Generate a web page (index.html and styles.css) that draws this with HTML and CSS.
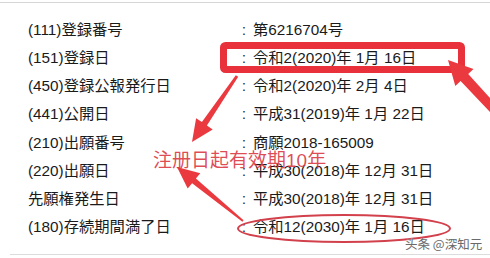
FILE: index.html
```html
<!DOCTYPE html>
<html lang="ja">
<head>
<meta charset="utf-8">
<link rel="stylesheet" href="styles.css">
</head>
<body>
<div class="page">
  <div class="sheet">
    <div class="row"><span class="label">(111)登録番号</span><span class="colon">:</span><span class="value">第6216704号</span></div>
    <div class="row"><span class="label">(151)登録日</span><span class="colon">:</span><span class="value">令和2(2020)年 1月 16日</span></div>
    <div class="row"><span class="label">(450)登録公報発行日</span><span class="colon">:</span><span class="value">令和2(2020)年 2月 4日</span></div>
    <div class="row"><span class="label">(441)公開日</span><span class="colon">:</span><span class="value">平成31(2019)年 1月 22日</span></div>
    <div class="row"><span class="label">(210)出願番号</span><span class="colon">:</span><span class="value">商願2018-165009</span></div>
    <div class="row"><span class="label">(220)出願日</span><span class="colon">:</span><span class="value">平成30(2018)年 12月 31日</span></div>
    <div class="row"><span class="label">先願権発生日</span><span class="colon">:</span><span class="value">平成30(2018)年 12月 31日</span></div>
    <div class="row"><span class="label">(180)存続期間満了日</span><span class="colon">:</span><span class="value">令和12(2030)年 1月 16日</span></div>
  </div>
  <div class="rule"></div>
  <svg class="marks" width="490" height="258" viewBox="0 0 490 258">
    <rect x="223.5" y="45.5" width="238" height="24" rx="2" fill="none" stroke="#e8313a" stroke-width="7"/>
    <ellipse cx="344" cy="228.5" rx="106" ry="13.5" fill="none" stroke="#d2404c" stroke-width="2"/>
    <polygon fill="#ea3a40" points="448,60 473.5,68.9 468.2,73.9 503.3,112.9 496.7,119.1 460.6,81.1 455.3,86.1"/>
    <polygon fill="#ea3a40" points="192,142 196.1,118.2 201.9,122.1 235.8,75.2 238.2,76.8 206.9,125.5 212.7,129.4"/>
    <polygon fill="#ea3a40" points="177,167 200.3,173.2 195.9,178.6 243.6,220.2 242.4,221.8 192.1,183.2 187.7,188.6"/>
  </svg>
  <div class="note">注册日起有效期10年</div>
  <div class="watermark">头条 @深知元</div>
</div>
</body>
</html>
```
FILE: styles.css
```css
html, body {
  margin: 0;
  padding: 0;
  background: #ffffff;
}
.page {
  position: relative;
  width: 490px;
  height: 258px;
  overflow: hidden;
  font-family: "Liberation Sans", "Noto Sans CJK JP", sans-serif;
  color: #1a1a1a;
}
.sheet {
  margin-top: 2px;
  border-top: 1px solid #d6d6d6;
  padding: 13px 0 13px 0;
  display: flex;
  flex-direction: column;
}
.rule {
  margin-left: 10px;
  border-top: 1px solid #dcdcdc;
}
.row {
  display: grid;
  grid-template-columns: 214px 11px 1fr;
  padding-left: 28px;
  height: 28.15px;
  align-items: center;
  font-size: 15.3px;
  line-height: 18px;
}
.colon {
  font-size: 14px;
}
.marks {
  position: absolute;
  left: 0;
  top: 0;
}
.note {
  position: absolute;
  left: 153px;
  top: 149px;
  font-family: "Liberation Sans", "Noto Sans CJK SC", sans-serif;
  font-size: 19px;
  line-height: 24px;
  color: rgba(218, 52, 62, 0.88);
  white-space: nowrap;
}
.watermark {
  position: absolute;
  left: 405px;
  top: 236px;
  font-family: "Noto Sans CJK SC", sans-serif;
  font-size: 12.5px;
  line-height: 15px;
  color: #6a6a6a;
  white-space: nowrap;
  text-shadow: 0 0 1px #ffffff;
}
```
